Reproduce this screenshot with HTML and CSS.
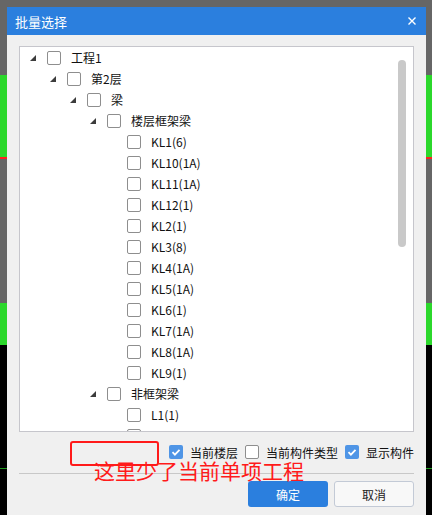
FILE: index.html
```html
<!DOCTYPE html>
<html lang="zh-CN">
<head>
    <meta charset="UTF-8">
    <title>批量选择</title>
    <link rel="stylesheet" href="styles.css">
</head>
<body>
    <div class="dialog">
        <div class="title-bar">
            <span class="title">批量选择</span>
            <span class="close">
                <svg width="8" height="8" viewBox="0 0 8 8"><path d="M0.5 0.5L7.5 7.5M7.5 0.5L0.5 7.5" stroke="#fff" stroke-width="1.4"/></svg>
            </span>
        </div>

        <div class="dialog-body">
            <div class="tree-panel">
                <div class="tree">
                    <div class="node lvl-0"><span class="toggle"></span><span class="box"></span><span class="label">工程1</span></div>
                    <div class="node lvl-1"><span class="toggle"></span><span class="box"></span><span class="label">第2层</span></div>
                    <div class="node lvl-2"><span class="toggle"></span><span class="box"></span><span class="label">梁</span></div>
                    <div class="node lvl-3"><span class="toggle"></span><span class="box"></span><span class="label">楼层框架梁</span></div>
                    <div class="node lvl-4"><span class="toggle leaf"></span><span class="box"></span><span class="label">KL1(6)</span></div>
                    <div class="node lvl-4"><span class="toggle leaf"></span><span class="box"></span><span class="label">KL10(1A)</span></div>
                    <div class="node lvl-4"><span class="toggle leaf"></span><span class="box"></span><span class="label">KL11(1A)</span></div>
                    <div class="node lvl-4"><span class="toggle leaf"></span><span class="box"></span><span class="label">KL12(1)</span></div>
                    <div class="node lvl-4"><span class="toggle leaf"></span><span class="box"></span><span class="label">KL2(1)</span></div>
                    <div class="node lvl-4"><span class="toggle leaf"></span><span class="box"></span><span class="label">KL3(8)</span></div>
                    <div class="node lvl-4"><span class="toggle leaf"></span><span class="box"></span><span class="label">KL4(1A)</span></div>
                    <div class="node lvl-4"><span class="toggle leaf"></span><span class="box"></span><span class="label">KL5(1A)</span></div>
                    <div class="node lvl-4"><span class="toggle leaf"></span><span class="box"></span><span class="label">KL6(1)</span></div>
                    <div class="node lvl-4"><span class="toggle leaf"></span><span class="box"></span><span class="label">KL7(1A)</span></div>
                    <div class="node lvl-4"><span class="toggle leaf"></span><span class="box"></span><span class="label">KL8(1A)</span></div>
                    <div class="node lvl-4"><span class="toggle leaf"></span><span class="box"></span><span class="label">KL9(1)</span></div>
                    <div class="node lvl-3"><span class="toggle"></span><span class="box"></span><span class="label">非框架梁</span></div>
                    <div class="node lvl-4"><span class="toggle leaf"></span><span class="box"></span><span class="label">L1(1)</span></div>
                    <div class="node lvl-4"><span class="toggle leaf"></span><span class="box"></span><span class="label">L2(1)</span></div>
                </div>
                <div class="scrollbar"><div class="thumb"></div></div>
            </div>

            <div class="options">
                <span class="box checked"></span><span class="opt-label">当前楼层</span>
                <span class="box"></span><span class="opt-label">当前构件类型</span>
                <span class="box checked"></span><span class="opt-label">显示构件</span>
            </div>

            <div class="separator"></div>

            <div class="button-group">
                <button class="btn-ok">确定</button>
                <button class="btn-cancel">取消</button>
            </div>
        </div>
    </div>

    <!-- annotation drawn over the screenshot -->
    <div class="mark-box"></div>
    <div class="mark-text">这里少了当前单项工程</div>
</body>
</html>
```

FILE: styles.css
```css
:root {
    --title-blue: #2b7fde;
    --check-blue: #4f95e6;
    --scene-gray: #666666;
    --scene-green: #2bd82b;
    --mark-red: #ff1a1a;
}

body {
    margin: 0;
    width: 432px;
    height: 515px;
    overflow: hidden;
    font-family: "Noto Sans CJK SC", "Noto Sans", sans-serif;
    font-size: 12px;
    color: #111;
    position: relative;
    background: linear-gradient(to bottom,
        var(--scene-gray) 0 75px,
        var(--scene-green) 75px 157px,
        #ff2020 157px 159px,
        var(--scene-gray) 159px 303px,
        var(--scene-green) 303px 345px,
        #000 345px 468px,
        #1f9a1f 468px 469px,
        #000 469px);
}

.dialog {
    margin: 7px 0 0 7px;
    width: 419px;
    height: 508px;
    background: #f0f0f0;
}

.title-bar {
    height: 28px;
    background: var(--title-blue);
    display: flex;
    align-items: center;
    justify-content: space-between;
    padding: 0 10px 0 8px;
    color: white;
}

.title {
    font-size: 13px;
}

.close {
    display: flex;
    margin-top: 0;
}

.dialog-body {
    padding: 11px 12px 0 12px;
}

.tree-panel {
    height: 386px;
    box-sizing: border-box;
    border: 1px solid #c6c6cc;
    background: white;
    display: flex;
    overflow: hidden;
}

.tree {
    flex: 1;
    padding-top: 0;
}

.node {
    display: flex;
    align-items: center;
    height: 21px;
    white-space: nowrap;
}

.lvl-0 { padding-left: 8px; }
.lvl-1 { padding-left: 28px; }
.lvl-2 { padding-left: 48px; }
.lvl-3 { padding-left: 68px; }
.lvl-4 { padding-left: 88px; }

.toggle {
    width: 12px;
    height: 6px;
    display: flex;
}

.toggle::before {
    content: "";
    margin-left: 2px;
    width: 0;
    height: 0;
    border-left: 6px solid transparent;
    border-bottom: 6px solid #3c3c3c;
}

.toggle.leaf::before {
    display: none;
}

.box {
    width: 14px;
    height: 14px;
    box-sizing: border-box;
    border: 1px solid #8e8e8e;
    border-radius: 2px;
    background: white;
    flex-shrink: 0;
}

.node .box {
    margin-left: 7px;
}

.label {
    margin-left: 10px;
}

.scrollbar {
    width: 14px;
    padding-top: 13px;
    margin-right: 4px;
    display: flex;
    justify-content: center;
}

.thumb {
    width: 8px;
    height: 187px;
    border-radius: 4px;
    background: #c9c9c9;
}

.options {
    display: flex;
    justify-content: flex-end;
    align-items: center;
    gap: 7px;
    height: 20px;
    margin-top: 10px;
}

.box.checked {
    border: none;
    background: var(--check-blue) url("data:image/svg+xml,%3Csvg xmlns='http://www.w3.org/2000/svg' width='14' height='14'%3E%3Cpath d='M3.5 7.2l2.4 2.4 4.6-4.8' fill='none' stroke='white' stroke-width='1.8'/%3E%3C/svg%3E") no-repeat center;
}

.separator {
    height: 1px;
    background: #c8c8c8;
    margin-top: 11px;
}

.button-group {
    display: flex;
    justify-content: flex-end;
    gap: 6px;
    margin-top: 7px;
}

button {
    width: 80px;
    height: 26px;
    border-radius: 3px;
    font-family: inherit;
    font-size: 12px;
    padding: 0;
    cursor: pointer;
}

.btn-ok {
    background: var(--title-blue);
    border: none;
    color: white;
}

.btn-cancel {
    background: #f8f8f8;
    border: 1px solid #c3cad6;
    color: #222;
}

.mark-box {
    position: absolute;
    left: 70px;
    top: 441px;
    width: 89px;
    height: 25px;
    box-sizing: border-box;
    border: 2px solid var(--mark-red);
    border-radius: 3px;
}

.mark-text {
    position: absolute;
    left: 94px;
    top: 460px;
    font-size: 21px;
    line-height: 21px;
    color: var(--mark-red);
    white-space: nowrap;
}
```
